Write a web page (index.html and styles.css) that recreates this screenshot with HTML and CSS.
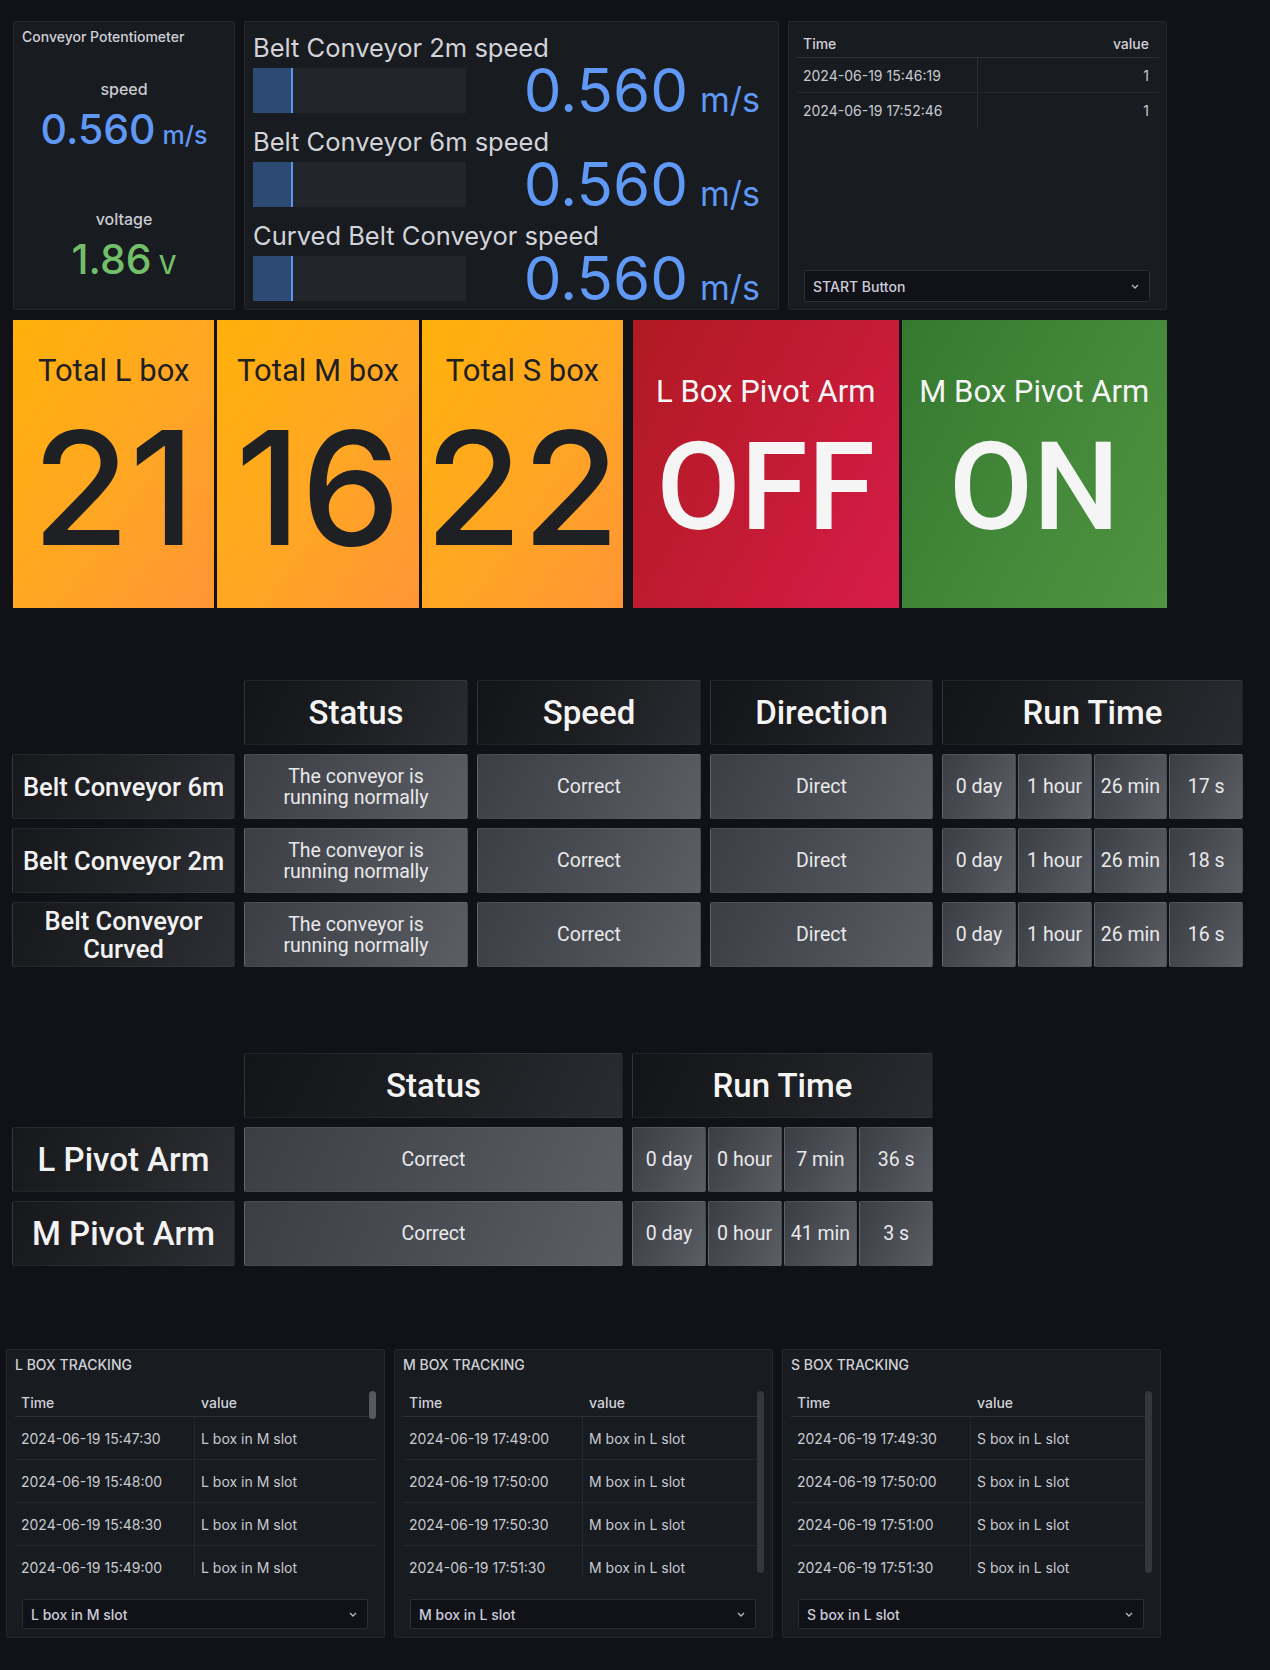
FILE: index.html
```html
<!DOCTYPE html>
<html>
<head>
<meta charset="utf-8">
<link rel="stylesheet" href="styles.css">
</head>
<body>
<div class="dash">
  <div class="row r1">
    <section class="panel pot">
      <div class="panel-title">Conveyor Potentiometer</div>
      <div class="pot-item first">
        <div class="pot-label">speed</div>
        <div class="pot-value blue">0.560<span class="pot-unit">m/s</span></div>
      </div>
      <div class="pot-item second">
        <div class="pot-label">voltage</div>
        <div class="pot-value green">1.86<span class="pot-unit">V</span></div>
      </div>
    </section>

    <section class="panel bars">
      <div class="bar-row">
        <div class="bar-label">Belt Conveyor 2m speed</div>
        <div class="bar-line">
          <div class="bar-track"><div class="bar-fill"></div></div>
          <div class="bar-value">0.560<span class="bar-unit">m/s</span></div>
        </div>
      </div>
      <div class="bar-row">
        <div class="bar-label">Belt Conveyor 6m speed</div>
        <div class="bar-line">
          <div class="bar-track"><div class="bar-fill"></div></div>
          <div class="bar-value">0.560<span class="bar-unit">m/s</span></div>
        </div>
      </div>
      <div class="bar-row">
        <div class="bar-label">Curved Belt Conveyor speed</div>
        <div class="bar-line">
          <div class="bar-track"><div class="bar-fill"></div></div>
          <div class="bar-value">0.560<span class="bar-unit">m/s</span></div>
        </div>
      </div>
    </section>

    <section class="panel log">
      <div class="ltbl">
        <div class="lhead"><div class="lc1">Time</div><div class="lc2 right">value</div></div>
        <div class="lrow"><div class="lc1 div">2024-06-19 15:46:19</div><div class="lc2 right">1</div></div>
        <div class="lrow"><div class="lc1 div">2024-06-19 17:52:46</div><div class="lc2 right">1</div></div>
      </div>
      <div class="select log-select"><span>START Button</span><svg class="chev" width="8" height="5" viewBox="0 0 8 5"><path d="M1 1l3 3 3-3" fill="none" stroke="#b8b9c2" stroke-width="1.3"/></svg></div>
    </section>
  </div>

  <div class="row r2">
    <div class="group orange">
      <div class="tile o"><div class="tile-title">Total L box</div><div class="tile-num">21</div></div>
      <div class="tile o"><div class="tile-title">Total M box</div><div class="tile-num">16</div></div>
      <div class="tile o"><div class="tile-title">Total S box</div><div class="tile-num">22</div></div>
    </div>
    <div class="group onoff">
      <div class="tile red"><div class="tile-title">L Box Pivot Arm</div><div class="tile-num">OFF</div></div>
      <div class="tile grn"><div class="tile-title">M Box Pivot Arm</div><div class="tile-num">ON</div></div>
    </div>
  </div>

  <div class="tgrid conv">
    <div class="blank"></div>
    <div class="cell hd">Status</div>
    <div class="cell hd">Speed</div>
    <div class="cell hd">Direction</div>
    <div class="cell hd">Run Time</div>

    <div class="cell lbl">Belt Conveyor 6m</div>
    <div class="cell val">The conveyor is<br>running normally</div>
    <div class="cell val">Correct</div>
    <div class="cell val">Direct</div>
    <div class="split"><div class="cell val">0 day</div><div class="cell val">1 hour</div><div class="cell val">26 min</div><div class="cell val">17 s</div></div>

    <div class="cell lbl">Belt Conveyor 2m</div>
    <div class="cell val">The conveyor is<br>running normally</div>
    <div class="cell val">Correct</div>
    <div class="cell val">Direct</div>
    <div class="split"><div class="cell val">0 day</div><div class="cell val">1 hour</div><div class="cell val">26 min</div><div class="cell val">18 s</div></div>

    <div class="cell lbl">Belt Conveyor<br>Curved</div>
    <div class="cell val">The conveyor is<br>running normally</div>
    <div class="cell val">Correct</div>
    <div class="cell val">Direct</div>
    <div class="split"><div class="cell val">0 day</div><div class="cell val">1 hour</div><div class="cell val">26 min</div><div class="cell val">16 s</div></div>
  </div>

  <div class="tgrid pivot">
    <div class="blank"></div>
    <div class="cell hd">Status</div>
    <div class="cell hd">Run Time</div>

    <div class="cell lbl big">L Pivot Arm</div>
    <div class="cell val">Correct</div>
    <div class="split"><div class="cell val">0 day</div><div class="cell val">0 hour</div><div class="cell val">7 min</div><div class="cell val">36 s</div></div>

    <div class="cell lbl big">M Pivot Arm</div>
    <div class="cell val">Correct</div>
    <div class="split"><div class="cell val">0 day</div><div class="cell val">0 hour</div><div class="cell val">41 min</div><div class="cell val">3 s</div></div>
  </div>

  <div class="row r5">
    <section class="panel track">
      <div class="panel-title">L BOX TRACKING</div>
      <div class="tscroll">
        <div class="thead"><div class="tc1">Time</div><div class="tc2">value</div></div>
        <div class="trow"><div class="tc1">2024-06-19 15:47:30</div><div class="tc2">L box in M slot</div></div>
        <div class="trow"><div class="tc1">2024-06-19 15:48:00</div><div class="tc2">L box in M slot</div></div>
        <div class="trow"><div class="tc1">2024-06-19 15:48:30</div><div class="tc2">L box in M slot</div></div>
        <div class="trow"><div class="tc1">2024-06-19 15:49:00</div><div class="tc2">L box in M slot</div></div>
        <div class="sb short"></div>
      </div>
      <div class="select track-select"><span>L box in M slot</span><svg class="chev" width="8" height="5" viewBox="0 0 8 5"><path d="M1 1l3 3 3-3" fill="none" stroke="#b8b9c2" stroke-width="1.3"/></svg></div>
    </section>
    <section class="panel track">
      <div class="panel-title">M BOX TRACKING</div>
      <div class="tscroll">
        <div class="thead"><div class="tc1">Time</div><div class="tc2">value</div></div>
        <div class="trow"><div class="tc1">2024-06-19 17:49:00</div><div class="tc2">M box in L slot</div></div>
        <div class="trow"><div class="tc1">2024-06-19 17:50:00</div><div class="tc2">M box in L slot</div></div>
        <div class="trow"><div class="tc1">2024-06-19 17:50:30</div><div class="tc2">M box in L slot</div></div>
        <div class="trow"><div class="tc1">2024-06-19 17:51:30</div><div class="tc2">M box in L slot</div></div>
        <div class="sb long"></div>
      </div>
      <div class="select track-select"><span>M box in L slot</span><svg class="chev" width="8" height="5" viewBox="0 0 8 5"><path d="M1 1l3 3 3-3" fill="none" stroke="#b8b9c2" stroke-width="1.3"/></svg></div>
    </section>
    <section class="panel track">
      <div class="panel-title">S BOX TRACKING</div>
      <div class="tscroll">
        <div class="thead"><div class="tc1">Time</div><div class="tc2">value</div></div>
        <div class="trow"><div class="tc1">2024-06-19 17:49:30</div><div class="tc2">S box in L slot</div></div>
        <div class="trow"><div class="tc1">2024-06-19 17:50:00</div><div class="tc2">S box in L slot</div></div>
        <div class="trow"><div class="tc1">2024-06-19 17:51:00</div><div class="tc2">S box in L slot</div></div>
        <div class="trow"><div class="tc1">2024-06-19 17:51:30</div><div class="tc2">S box in L slot</div></div>
        <div class="sb long"></div>
      </div>
      <div class="select track-select"><span>S box in L slot</span><svg class="chev" width="8" height="5" viewBox="0 0 8 5"><path d="M1 1l3 3 3-3" fill="none" stroke="#b8b9c2" stroke-width="1.3"/></svg></div>
    </section>
  </div>
</div>
</body>
</html>
```

FILE: styles.css
```css
* { box-sizing: border-box; }
html, body { margin: 0; padding: 0; background: #111217; }
body {
  font-family: Inter, "Noto Sans", "DejaVu Sans", sans-serif;
  color: #ccccdc;
}
.dash { width: 1270px; height: 1670px; padding-top: 21px; overflow: hidden; }
.row { display: flex; }

/* generic panel */
.panel {
  background: #181b1f;
  border: 1px solid #25282e;
  border-radius: 2px;
  position: relative;
}
.panel-title {
  font-size: 14px;
  font-weight: 500;
  line-height: 16px;
  color: #d0d1d8;
  white-space: nowrap;
}

/* row 1 */
.r1 { margin-left: 13px; gap: 9px; height: 289px; }

.pot { width: 222px; padding: 7px 8px; }
.pot-item { display: flex; flex-direction: column; align-items: center; }
.pot-item.first { margin-top: 34px; }
.pot-item.second { margin-top: 51px; }
.pot-label { font-size: 16px; line-height: 20px; font-weight: 500; color: #c9cad2; }
.pot-value { font-size: 41px; line-height: 46px; margin-top: 7px; font-weight: 500; white-space: nowrap; }
.pot-unit { font-size: 25px; margin-left: 7px; }
.blue { color: #5f98f5; }
.green { color: #73bf69; }

.bars { width: 535px; padding: 11px 18px 0 8px; }
.bar-row + .bar-row { margin-top: 14px; }
.bar-label { font-size: 25.5px; line-height: 30px; color: #d3d4da; white-space: nowrap; }
.bar-line {
  display: flex;
  align-items: flex-end;
  justify-content: space-between;
  height: 45px;
  margin-top: 5px;
}
.bar-track { width: 213px; height: 45px; background: #22252b; }
.bar-fill { width: 40px; height: 100%; background: #2d4a75; border-right: 2px solid #5a95f2; }
.bar-value {
  font-size: 60px;
  line-height: 60px;
  margin-bottom: -17px;
  color: #5f98f5;
  white-space: nowrap;
}
.bar-unit { font-size: 34px; margin-left: 12px; }

.log { width: 379px; padding: 8px 7px 7px 7px; display: flex; flex-direction: column; }
.ltbl { font-size: 14px; }
.lhead {
  display: flex;
  height: 28px;
  align-items: center;
  border-bottom: 1px solid rgba(204, 204, 220, 0.12);
  font-weight: 500;
  color: #d0d1d8;
}
.lrow {
  display: flex;
  height: 35px;
  align-items: center;
  border-bottom: 1px solid rgba(204, 204, 220, 0.07);
  color: #c9cad2;
}
.lrow:last-child { border-bottom: none; }
.lc1 { width: 182px; padding-left: 7px; height: 100%; display: flex; align-items: center; }
.lc1.div { border-right: 1px solid rgba(204, 204, 220, 0.1); }
.lc2 { flex: 1; padding-right: 10px; height: 100%; display: flex; align-items: center; }
.right { justify-content: flex-end; }

.select {
  margin-top: auto;
  background: #111217;
  border: 1px solid #2b2e34;
  border-radius: 2px;
  display: flex;
  align-items: center;
  justify-content: space-between;
  font-size: 14px;
  font-weight: 500;
  color: #ccccdc;
}
.log-select { height: 32px; margin-left: 8px; margin-right: 9px; padding: 0 10px 0 8px; }
.chev { display: block; }

/* row 2: stat tiles */
.r2 { margin-top: 10px; margin-left: 13px; gap: 10px; height: 288px; }
.group { display: flex; gap: 3px; }
.group.orange { width: 610px; }
.group.onoff { width: 534px; }
.tile {
  flex: 1;
  display: flex;
  flex-direction: column;
  align-items: center;
  font-family: Roboto, "Liberation Sans", sans-serif;
  white-space: nowrap;
}
.tile.o { background: linear-gradient(125deg, #ffb10a 0%, #ffa624 55%, #ff9535 100%); color: #1f2024; }
.tile.red { background: linear-gradient(120deg, #b01a22 0%, #c41b35 55%, #d81c4b 100%); color: #f5f5f5; }
.tile.grn { background: linear-gradient(120deg, #34792f 0%, #44883a 55%, #4f9440 100%); color: #f5f5f5; }
.tile.o .tile-title { font-size: 31px; line-height: 36px; margin-top: 33px; }
.tile.o .tile-num {
  font-family: Inter, Roboto, sans-serif;
  font-size: 158px;
  line-height: 158px;
  margin-top: 20px;
  font-weight: 500;
}
.tile.red .tile-title, .tile.grn .tile-title { font-size: 31px; line-height: 36px; margin-top: 54px; }
.tile.red .tile-num, .tile.grn .tile-num { font-size: 122px; line-height: 122px; margin-top: 17px; font-weight: 500; }

/* html tables */
.tgrid {
  display: grid;
  margin-left: 12px;
  gap: 9px;
  grid-auto-rows: 65px;
  font-family: Roboto, "Liberation Sans", sans-serif;
}
.conv { grid-template-columns: 223px 224px 224px 223px 301px; margin-top: 72px; }
.pivot { grid-template-columns: 223px 379px 301px; margin-top: 86px; }
.cell {
  display: flex;
  align-items: center;
  justify-content: center;
  text-align: center;
  border: 1px solid rgba(255, 255, 255, 0.06);
  border-radius: 2px;
}
.hd {
  background: linear-gradient(115deg, #131418 0%, #1d1e22 50%, #2b2c31 100%);
  font-size: 33px;
  font-weight: 500;
  color: #f4f4f4;
}
.lbl {
  background: linear-gradient(115deg, #17181c 0%, #212226 50%, #2e3035 100%);
  font-size: 25.5px;
  line-height: 28px;
  font-weight: 500;
  color: #f2f2f2;
}
.lbl.big { font-size: 33px; }
.val {
  background: linear-gradient(115deg, #3b3e45 0%, #4a4d54 50%, #5b5e65 100%);
  font-size: 19.5px;
  line-height: 21px;
  color: #e9e9ea;
}
.split { display: flex; gap: 2px; }
.split .cell { flex: 1; }

/* row 5: tracking panels */
.r5 { margin-top: 83px; margin-left: 6px; gap: 9px; height: 289px; }
.track { width: 379px; padding: 7px 8px 8px 8px; display: flex; flex-direction: column; }
.tscroll {
  margin-top: 16px;
  height: 188px;
  overflow: hidden;
  position: relative;
  font-size: 14px;
}
.thead {
  display: flex;
  height: 28px;
  align-items: center;
  border-bottom: 1px solid rgba(204, 204, 220, 0.12);
  font-weight: 500;
  color: #d0d1d8;
}
.trow {
  display: flex;
  height: 43px;
  align-items: center;
  border-bottom: 1px solid rgba(204, 204, 220, 0.07);
  color: #c9cad2;
}
.tc1 { width: 180px; padding-left: 6px; height: 100%; display: flex; align-items: center; }
.trow .tc1 { border-right: 1px solid rgba(204, 204, 220, 0.08); }
.tc2 { flex: 1; padding-left: 6px; height: 100%; display: flex; align-items: center; }
.sb { position: absolute; right: 0; top: 2px; width: 7px; border-radius: 4px; }
.sb.short { height: 28px; background: #56595f; }
.sb.long { height: 182px; background: #34373d; }
.track-select { height: 30px; margin-left: 7px; margin-right: 8px; padding: 0 10px 0 8px; }
```
